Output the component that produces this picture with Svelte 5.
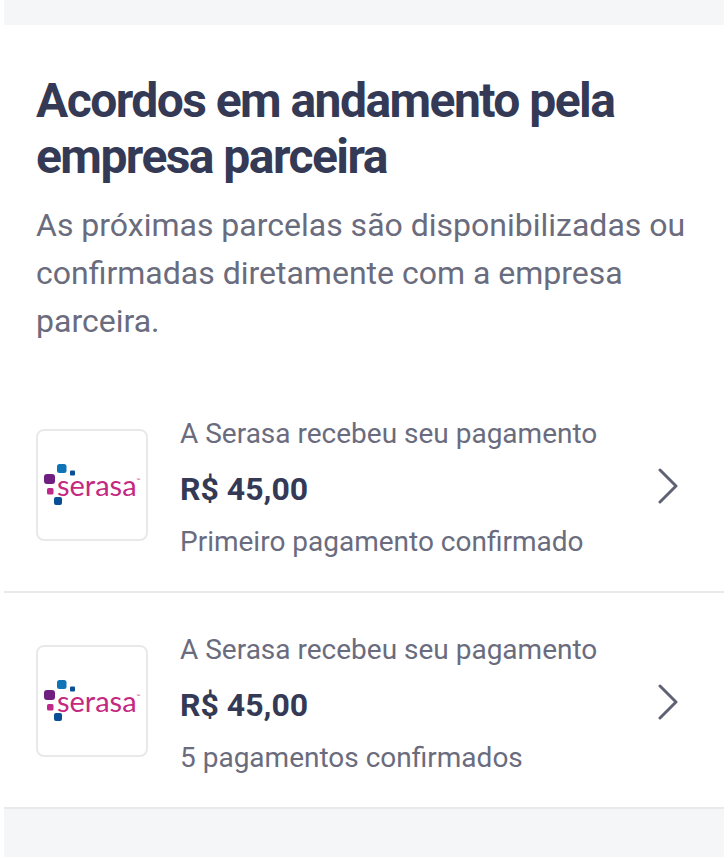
<script>
  const items = [
    { sub: 'Primeiro pagamento confirmado' },
    { sub: '5 pagamentos confirmados' }
  ];
</script>

<div class="page">
  <div class="band top"></div>
  <section class="head">
    <h1>Acordos em andamento pela empresa parceira</h1>
    <p>As próximas parcelas são disponibilizadas ou confirmadas diretamente com a empresa parceira.</p>
  </section>
  <ul>
    {#each items as item}
      <li>
        <div class="logo">
          <svg class="dots" width="32" height="42" viewBox="0 0 32 42" aria-hidden="true">
            <rect x="13" y="0" width="9.5" height="9" rx="2.5" fill="#0f73b8" />
            <rect x="26" y="6.5" width="5" height="5" rx="1" fill="#0a4f96" />
            <rect x="0" y="10" width="11" height="10" rx="3" fill="#6f1f80" />
            <rect x="3" y="24" width="6.5" height="6.5" rx="1.5" fill="#c0288a" />
            <rect x="10" y="33" width="8" height="8" rx="2" fill="#0a4f96" />
          </svg>
          <span class="word">serasa<sup>™</sup></span>
        </div>
        <div class="text">
          <span class="line">A Serasa recebeu seu pagamento</span>
          <strong>R$ 45,00</strong>
          <span class="line">{item.sub}</span>
        </div>
        <svg class="chev" width="24" height="36" viewBox="0 0 24 36" aria-hidden="true">
          <path d="M4 2 L20 18 L4 34" fill="none" stroke="#5f6275" stroke-width="3" stroke-linecap="round" stroke-linejoin="round" />
        </svg>
      </li>
    {/each}
  </ul>
  <div class="band bottom"></div>
</div>

<style>
  :global(body) {
    background: #fff;
  }
  .page {
    width: 720px;
    margin: 0 4px;
    height: 857px;
    display: flex;
    flex-direction: column;
    font-family: Roboto, sans-serif;
  }
  .band {
    background: #f5f6f8;
  }
  .top {
    height: 25px;
  }
  .bottom {
    flex: 1;
  }
  .head {
    padding: 48px 32px 0;
  }
  h1 {
    margin: 0;
    font-size: 48px;
    line-height: 56px;
    font-weight: 700;
    letter-spacing: -1.56px;
    color: #343a55;
  }
  p {
    margin: 16px 0 0;
    font-size: 32px;
    line-height: 48px;
    font-weight: 400;
    color: #6a6c7e;
  }
  ul {
    list-style: none;
    margin: 32px 0 0;
    padding: 0;
  }
  li {
    display: flex;
    align-items: center;
    height: 214px;
    padding: 0 44px 0 32px;
    border-bottom: 2px solid #e8e9eb;
  }
  .logo {
    position: relative;
    width: 108px;
    height: 108px;
    flex: none;
    border: 2px solid #e8e9eb;
    border-radius: 8px;
    background: #fff;
    margin-top: 2px;
  }
  .dots {
    position: absolute;
    left: 6px;
    top: 33px;
  }
  .word {
    position: absolute;
    left: 19px;
    top: 36px;
    font-family: Lato, sans-serif;
    font-weight: 400;
    font-size: 29px;
    line-height: 36px;
    color: #c5297f;
  }
  sup {
    font-size: 5px;
    line-height: 0;
    vertical-align: 14px;
  }
  .text {
    flex: 1;
    display: flex;
    flex-direction: column;
    gap: 16px;
    margin-left: 32px;
    padding-top: 7px;
  }
  .line {
    font-size: 28px;
    line-height: 36px;
    color: #6a6c7e;
  }
  strong {
    font-size: 32px;
    line-height: 40px;
    font-weight: 700;
    color: #343a55;
    margin: 1px 0 -1px;
  }
  .chev {
    flex: none;
    margin-top: 4px;
  }
</style>
